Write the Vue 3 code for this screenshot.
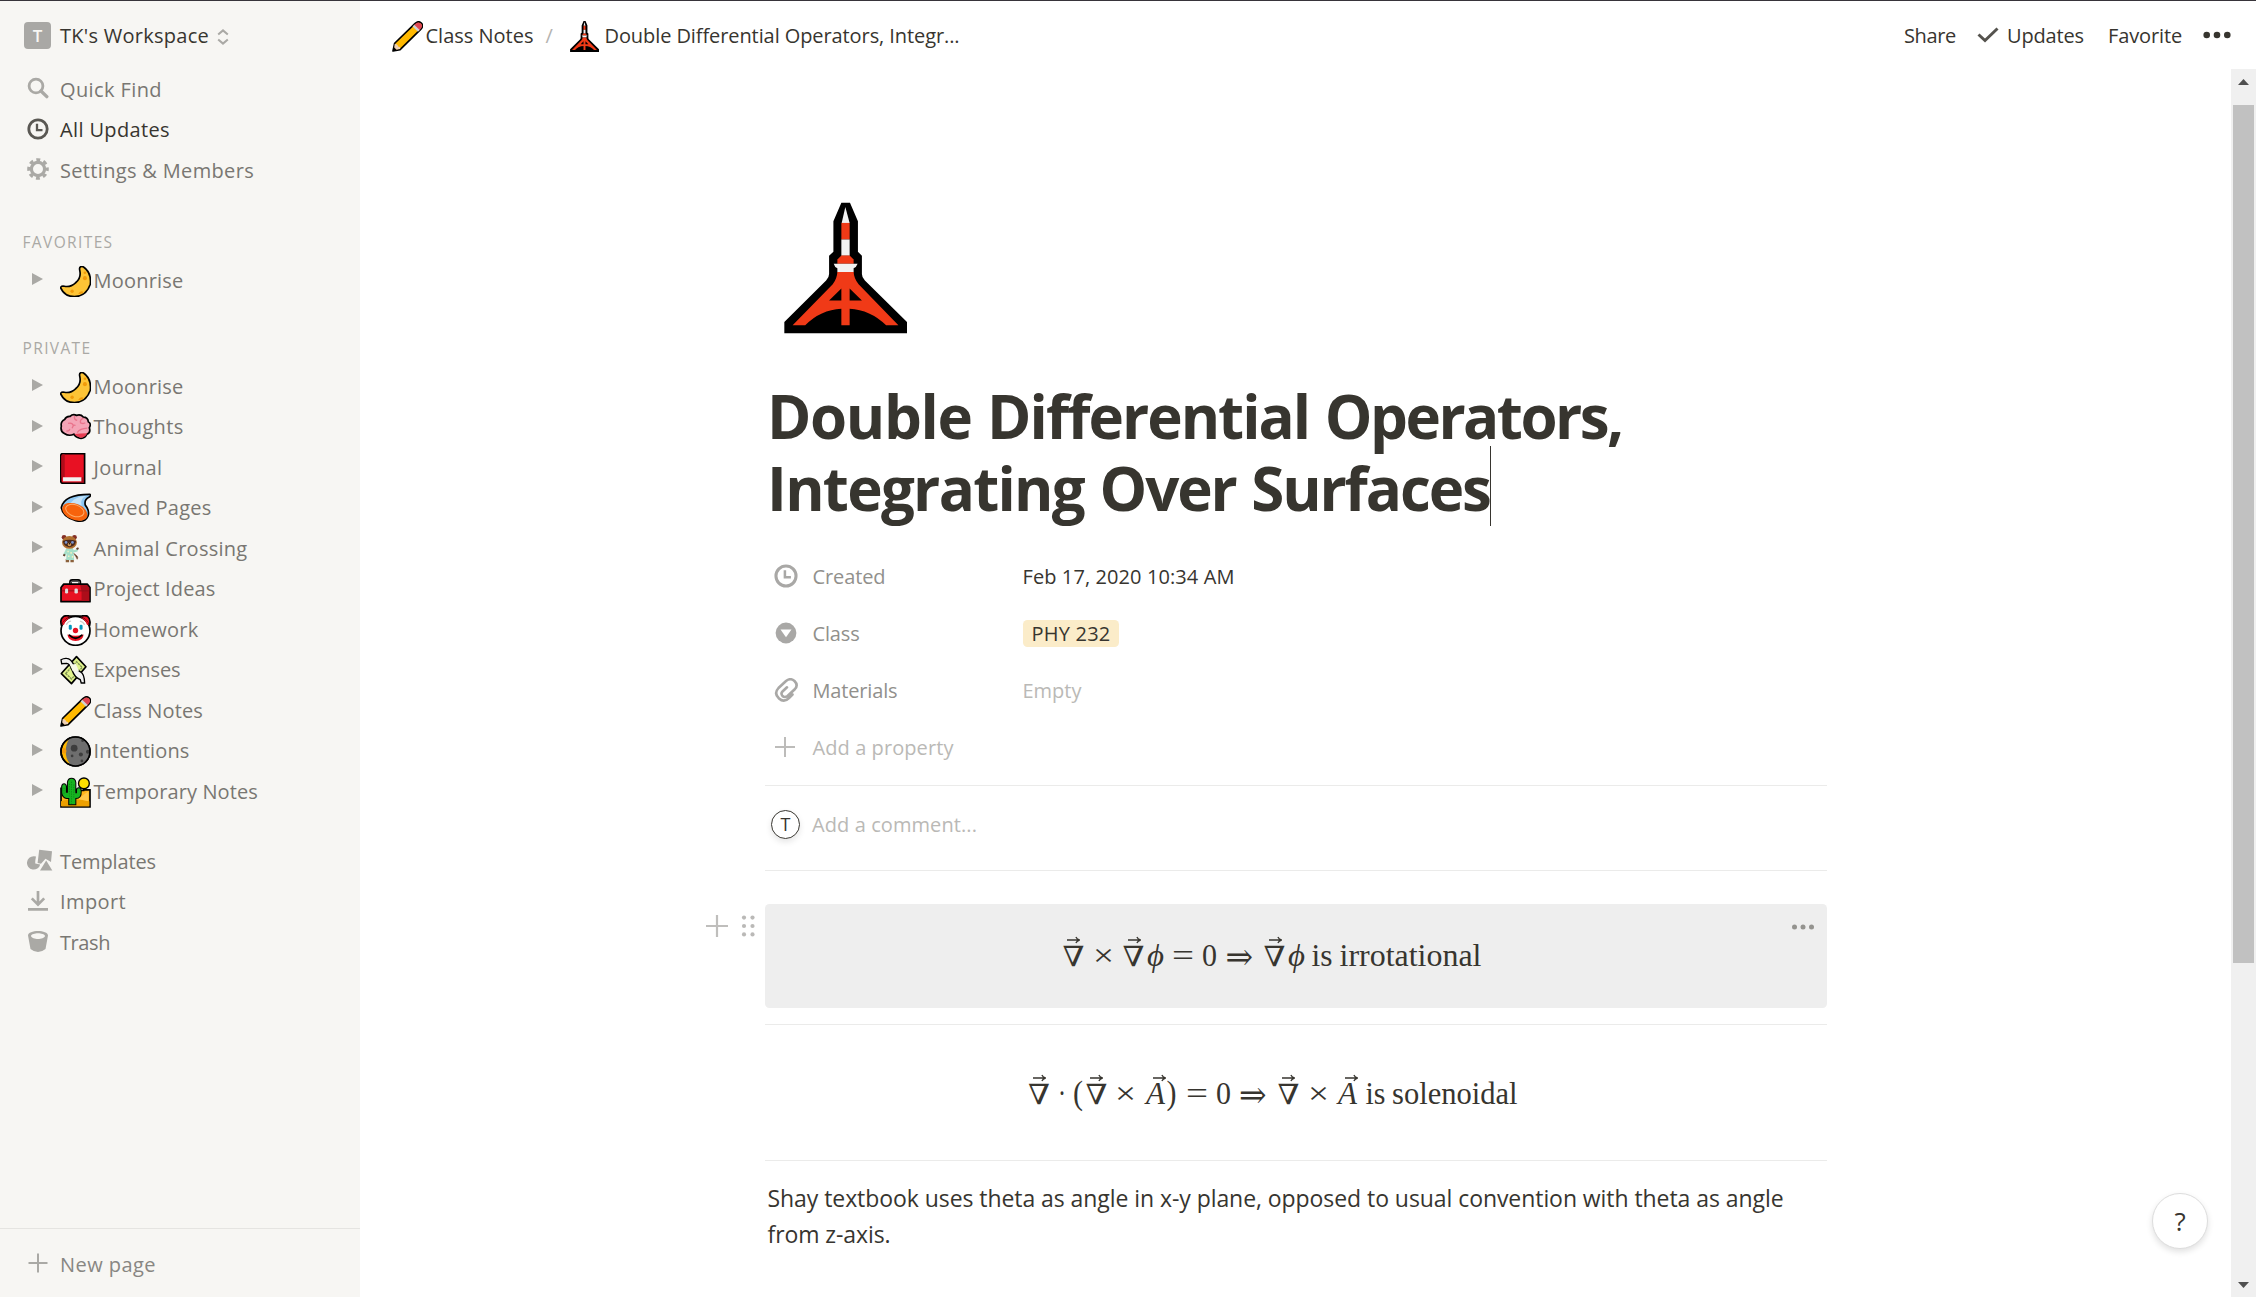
<script setup>
const vFit = {
  mounted(el, { value }) {
    const natural = el.getBoundingClientRect().width
    const count = [...el.textContent.trim()].length
    el.style.letterSpacing = `${(value - natural) / count}px`
  },
}

const pages = [
  { icon: 'moon', name: 'Moonrise', w: 90 },
  { icon: 'brain', name: 'Thoughts', w: 90 },
  { icon: 'book', name: 'Journal', w: 69 },
  { icon: 'comet', name: 'Saved Pages', w: 118 },
  { icon: 'nook', name: 'Animal Crossing', w: 154 },
  { icon: 'toolbox', name: 'Project Ideas', w: 122 },
  { icon: 'clown', name: 'Homework', w: 105 },
  { icon: 'money', name: 'Expenses', w: 87 },
  { icon: 'pencil', name: 'Class Notes', w: 109.5 },
  { icon: 'darkmoon', name: 'Intentions', w: 96 },
  { icon: 'desert', name: 'Temporary Notes', w: 164.5 },
]
const sections = [
  { title: 'FAVORITES', w: 91, cls: 'fav', items: pages.slice(0, 1) },
  { title: 'PRIVATE', w: 69, cls: 'priv', items: pages },
]

const vec = (x, y) => `M${x} ${y}h12.5m-3.6 -3q1 2.4 3.8 3q-2.8 .6 -3.8 3`
const eq1 = {
  tokens: [
    ['∇', 1062.5, 22, 'nabla'], ['×', 1093, 21, 'op'], ['∇', 1122.5, 22, 'nabla'], ['ϕ', 1147, 17, 'it'],
    ['=', 1172, 22, 'op'], ['0', 1202, 15, 'rm'], ['⇒', 1225, 29, 'arr'], ['∇', 1263.5, 22, 'nabla'],
    ['ϕ', 1288, 17, 'it'], ['is', 1311.5, 21, 'rm'], ['irrotational', 1339.5, 142, 'rm'],
  ],
  arrows: [1067, 1128, 1269],
}
const eq2 = {
  tokens: [
    ['∇', 1028, 22, 'nabla'], ['·', 1058, 8, 'rm'], ['(', 1073, 10, 'par'], ['∇', 1085.5, 22, 'nabla'],
    ['×', 1115, 21, 'op'], ['A', 1146, 19, 'it'], [')', 1166.5, 10, 'par'], ['=', 1186, 22, 'op'],
    ['0', 1216, 15, 'rm'], ['⇒', 1238.5, 29, 'arr'], ['∇', 1277.5, 22, 'nabla'], ['×', 1308, 21, 'op'],
    ['A', 1338, 19, 'it'], ['is', 1365.5, 20, 'rm'], ['solenoidal', 1392, 125.5, 'rm'],
  ],
  arrows: [1033, 1090, 1153, 1282, 1345],
}
</script>

<template>
  <svg width="0" height="0" class="defs">
    <symbol id="moon" viewBox="0 0 92 92">
      <path d="M62 2Q56 4 59 15Q63 36 47 49Q31 64 13 60Q3 58 2 65Q14 91 43 91Q78 90 90 54Q94 20 70 3Q66 0 62 2Z" fill="#fdc436" stroke="#000" stroke-width="5" />
      <g fill="#f19a0b"><circle cx="74" cy="36" r="6" /><circle cx="36" cy="75" r="5" /><circle cx="74" cy="20" r="4" /><path d="M54 83q6-12 16-6q-4 7-16 6Z" /></g>
    </symbol>
    <symbol id="brain" viewBox="0 0 92 92">
      <path d="M14 22Q18 12 30 13Q38 5 49 10Q62 6 69 15Q83 15 84 29Q94 34 87 47Q92 61 80 66Q73 80 59 78Q45 74 41 66Q27 73 13 64Q0 57 4 42Q1 28 14 22Z" fill="#f4a4b6" stroke="#000" stroke-width="5" />
      <path d="M43 65Q61 63 81 63Q74 77 59 76Q48 74 43 65Z" fill="#e73c52" />
      <path d="M24 34q12-4 16 7M36 48q4-12 10-8M44 12q-4 10 7 13M70 18q-12 4-9 14q8 4 14 0M51 61q8-12 30-13M19 56q8 2 10-6" fill="none" stroke="#e9738b" stroke-width="4" />
    </symbol>
    <symbol id="book" viewBox="0 0 92 92">
      <path d="M7 2H73V90H9Q2 90 2 82V10Q2 2 7 2Z" fill="#e81123" stroke="#000" stroke-width="5" />
      <path d="M4 10Q4 5 9 4H14V73H4Z" fill="#b00c1a" /><path d="M9 72H64V84H9Z" fill="#f2f2f2" /><path d="M64 72h7v16h-7z" fill="#a40b18" />
    </symbol>
    <symbol id="comet" viewBox="0 0 92 92">
      <path d="M4 43Q12 4 88 4Q94 6 87 12Q71 19 75 36Q89 53 83 69Q74 89 47 82Q7 71 4 43Z" fill="#8ec8f3" stroke="#000" stroke-width="5" />
      <path d="M41 20Q56 9 80 8Q58 15 64 36Q50 30 30 31Z" fill="#c4e2f7" />
      <ellipse cx="44" cy="56" rx="39" ry="24" transform="rotate(22 44 56)" fill="#f7630c" /><ellipse cx="44" cy="52" rx="28" ry="17" transform="rotate(20 44 52)" fill="none" stroke="#ffac69" stroke-width="3" />
    </symbol>
    <symbol id="nook" viewBox="0 0 92 92">
      <path d="M40 57Q58 68 51 75L47 67Z" fill="#4b2e22" stroke="#8d6549" stroke-width="2" />
      <path d="M17 74v10h10V75M31 74v10h10V74" fill="#8b613b" />
      <path d="M18 44L9 63L15 66L20 57L18 77H42L40 55L52 52L54 44L41 48L38 42Z" fill="#a6dfc8" />
      <path d="M22 52h4M31 56h4M24 66h4M35 68h4" stroke="#f6f2c0" stroke-width="5" /><path d="M10 61l5 3M49 45l6-3" stroke="#66422f" stroke-width="6" />
      <circle cx="12" cy="10" r="7" fill="#842f25" /><circle cx="43" cy="10" r="7" fill="#842f25" />
      <ellipse cx="28" cy="25" rx="22" ry="19" fill="#b0702f" /><path d="M8 21q20-8 40 0q-4 17-20 18q-16-1-20-18Z" fill="#49291f" />
      <circle cx="18" cy="25" r="4" fill="#7995d0" /><circle cx="37" cy="25" r="4" fill="#7995d0" /><ellipse cx="28" cy="31" rx="5" ry="5" fill="#d49b55" /><circle cx="28" cy="29" r="2" fill="#111" />
    </symbol>
    <symbol id="toolbox" viewBox="0 0 92 92">
      <path d="M31 32V24Q31 19 36 19H54Q59 19 59 24V32" fill="none" stroke="#000" stroke-width="8" /><path d="M32 31V25Q32 21 38 21H52Q58 21 58 25V31" fill="none" stroke="#6c6c6c" stroke-width="3" />
      <path d="M11 30H81L89 40V82H3V40Z" fill="#e81123" stroke="#000" stroke-width="5" stroke-linejoin="round" />
      <path d="M60 33H80L87 41V80H64V51Z" fill="#ad0d1a" /><path d="M5 50H87" stroke="#90101b" stroke-width="3" />
      <rect x="15" y="43" width="9" height="15" rx="4" fill="#ddd" /><rect x="43" y="43" width="10" height="15" rx="4" fill="#ddd" />
    </symbol>
    <symbol id="clown" viewBox="0 0 92 92">
      <path d="M4 30Q-1 12 11 4Q20 0 27 3H65Q75 0 82 4Q92 12 88 30Z" fill="#e81123" stroke="#000" stroke-width="5" />
      <circle cx="46" cy="47" r="43" fill="#fff" stroke="#000" stroke-width="5" />
      <path d="M6 29Q13 9 32 7Q16 16 12 29ZM86 29Q79 9 60 7Q76 16 80 29Z" fill="#e81123" />
      <path d="M19 29q5-11 14-11M59 18q9 1 14 11" fill="none" stroke="#ccc" stroke-width="4" />
      <rect x="26" y="29" width="9" height="15" rx="4" fill="#0497be" /><rect x="58" y="29" width="9" height="15" rx="4" fill="#0497be" />
      <circle cx="46" cy="46" r="8" fill="#e81123" /><path d="M22 58Q46 65 70 58Q69 77 46 77Q24 77 22 58Z" fill="#e81123" /><path d="M28 60Q46 78 65 60" fill="none" stroke="#000" stroke-width="5" stroke-linecap="round" />
    </symbol>
    <symbol id="money" viewBox="0 0 92 92">
      <path d="M4 55L49 5L77 35L34 85Z" fill="#e0f28c" stroke="#000" stroke-width="5" stroke-linejoin="round" />
      <path d="M17 55L49 20L66 37L34 71Z" fill="none" stroke="#7f9153" stroke-width="4" stroke-dasharray="7 2" />
      <path d="M5 26L3 14Q11 9 20 10Q32 11 40 27Q49 46 61 50Q72 55 73 83L63 83L60 73Q43 66 36 45Q28 25 20 25Z" fill="#f2f2f2" stroke="#000" stroke-width="4" />
      <path d="M29 29L47 27L57 49L38 48Z" fill="#f7f8e6" />
    </symbol>
    <symbol id="pencil" viewBox="0 0 92 92">
      <path d="M3 89L8 66L68 8Q78 -2 87 6Q95 15 85 25L24 85Z" fill="#ffb900" stroke="#000" stroke-width="5" stroke-linejoin="round" />
      <path d="M65 12L81 28L86 22Q93 14 85 7Q77 2 70 8Z" fill="#df4754" /><path d="M61 16L66 11L82 27L77 32Z" fill="#d2d2d2" /><path d="M8 68Q17 67 18 76Q26 77 24 83L8 86L6 83Z" fill="#eed0b5" /><path d="M3 89L6 78L14 86Z" />
    </symbol>
    <symbol id="darkmoon" viewBox="0 0 92 92">
      <circle cx="46" cy="46" r="43" fill="#ffb900" stroke="#000" stroke-width="5" /><path d="M30 5Q88 -2 90 46Q84 95 34 88Q17 72 17 47Q17 20 30 5Z" fill="#6e6e6e" />
      <path d="M8 36a8 8 0 0 1 5 16a8 8 0 0 1-8-3Z" fill="#f39a0c" />
      <g fill="#3d3d3d"><circle cx="42" cy="36" r="10" /><circle cx="62" cy="55" r="6" /><circle cx="36" cy="59" r="4" /><circle cx="83" cy="47" r="6" /><circle cx="65" cy="74" r="4" /><circle cx="67" cy="14" r="4" /></g>
      <circle cx="46" cy="46" r="43" fill="none" stroke="#000" stroke-width="5" />
    </symbol>
    <symbol id="desert" viewBox="0 0 92 92">
      <path d="M3 34H25V40H70V38H89V89H3Z" fill="#ffb61b" stroke="#000" stroke-width="5" /><path d="M3 72Q36 60 87 72V87H3Z" fill="#eda000" /><path d="M54 65L84 42V72Z" fill="#ffc84a" />
      <circle cx="71" cy="19" r="16" fill="#ffdf00" stroke="#000" stroke-width="4" />
      <path d="M26 82V64H20Q8 62 5 48V28Q6 20 12 20Q18 20 19 28V45H22V16Q24 4 34 4Q45 4 47 16V47H49V37Q51 31 57 32Q63 33 63 42Q64 64 47 64V82Z" fill="#16b421" stroke="#000" stroke-width="3" />
      <path d="M34 14V79M28 20V58M41 22V62M12 32V50" stroke="#087d14" stroke-width="2" stroke-dasharray="4 3" />
    </symbol>
    <symbol id="tower" viewBox="130 66 371 396">
      <path d="M303 67H329L353 123V215L365 227V282Q365 293 374 302L501 427V461H131V427L257 302Q266 293 266 282V227L279 215V123Z" />
      <path d="M315 80L304 128H328Z" fill="#f2f2f2" /><path d="M303 128H328V178H303Z" fill="#f03a17" /><path d="M303 178H328V227H303Z" fill="#f2f2f2" />
      <path d="M303 226H328L340 238V251H291V238Z" fill="#f03a17" /><path d="M280 251H352Q348 262 340 265V277H291V265Q283 262 280 251Z" fill="#f2f2f2" />
      <path d="M291 276H340Q341 296 355 313L475 437H438Q390 390 328 387V437H303V387Q240 390 194 437H156L277 313Q290 296 291 276Z" fill="#f03a17" />
      <path d="M303 326V362H266ZM328 326V362H365Z" />
    </symbol>
    <symbol id="clock" viewBox="0 0 22 22"><circle cx="11" cy="11" r="9.2" fill="none" stroke="currentColor" stroke-width="2.8" /><path d="M10 5.8V12.2H15.5" fill="none" stroke="currentColor" stroke-width="2.3" /></symbol>
  </svg>

  <div class="window">
    <aside class="sidebar">
      <header class="workspace">
        <span class="badge">T</span>
        <span class="txt" v-fit="149">TK's Workspace</span>
        <svg class="switch" width="12" height="16" viewBox="0 0 12 16" fill="none" stroke="#aaa9a5" stroke-width="2"><path d="M1.2 5.6L6 1.4L10.8 5.6M1.2 10.4L6 14.6L10.8 10.4" /></svg>
      </header>
      <nav class="menu">
        <div class="row">
          <svg width="22" height="22" viewBox="0 0 22 22" fill="none" stroke="#aaa9a5"><circle cx="9" cy="9" r="6.9" stroke-width="2.8" /><path d="M14 14L19.8 19.6" stroke-width="3.4" stroke-linecap="round" /></svg>
          <span class="txt" v-fit="102">Quick Find</span>
        </div>
        <div class="row active">
          <svg width="22" height="22"><use href="#clock" /></svg>
          <span class="txt" v-fit="110">All Updates</span>
        </div>
        <div class="row">
          <svg width="22" height="22" viewBox="-11 -11 22 22" fill="none" stroke="#aaa9a5"><circle r="6.6" stroke-width="3.2" /><circle r="9.2" stroke-width="3.2" stroke-dasharray="3.9 3.325" stroke-dashoffset="1.95" /></svg>
          <span class="txt" v-fit="194">Settings &amp; Members</span>
        </div>
      </nav>
      <section v-for="s in sections" :key="s.title" :class="s.cls">
        <h2><span class="txt" v-fit="s.w">{{ s.title }}</span></h2>
        <div v-for="p in s.items" :key="p.name" class="page">
          <svg class="tri" width="11" height="12" viewBox="0 0 11 12"><path d="M0 0L11 6L0 12Z" fill="#aaa9a5" /></svg>
          <svg class="emoji" width="31" height="31"><use :href="'#' + p.icon" /></svg>
          <span class="txt" v-fit="p.w">{{ p.name }}</span>
        </div>
      </section>
      <nav class="tools">
        <div class="row">
          <svg width="26" height="22" viewBox="0 0 26 22" fill="#aaa9a5"><path d="M7 7.2L9 7.4Q8 12 8.3 14.5L13.2 15.4A6.7 6.7 0 1 1 7 7.2Z" /><path d="M12.2 .7L25 2.2L24 13L18.5 9.7L14 14.7L10.6 14.1Z" /><path d="M19.2 11.5L25.3 21.6H13Z" /></svg>
          <span class="txt" v-fit="96">Templates</span>
        </div>
        <div class="row">
          <svg width="22" height="22" viewBox="0 0 22 22" fill="none" stroke="#aaa9a5" stroke-width="2.7"><path d="M11 1V14M4.8 8.4L11 14.6L17.2 8.4M1 19.4H21" /></svg>
          <span class="txt" v-fit="66">Import</span>
        </div>
        <div class="row">
          <svg width="22" height="22" viewBox="0 0 22 22" fill="#aaa9a5" fill-rule="evenodd"><path d="M1 5.5C1 -.5 21 -.5 21 5.5L18.5 19Q15 22 11 22Q7 22 3.5 19ZM4 6C5 10 17 10 18 6C17 2.4 5 2.4 4 6Z" /></svg>
          <span class="txt" v-fit="50">Trash</span>
        </div>
      </nav>
      <footer class="row newpage">
        <svg width="22" height="22" viewBox="0 0 22 22" stroke="#aaa9a5" stroke-width="2"><path d="M11 1.5V20.5M1.5 11H20.5" /></svg>
        <span class="txt" v-fit="96">New page</span>
      </footer>
    </aside>

    <main>
      <header class="topbar">
        <svg width="31" height="31"><use href="#pencil" /></svg>
        <span class="txt crumb" v-fit="108">Class Notes</span>
        <span class="slash">/</span>
        <svg width="29" height="31"><use href="#tower" /></svg>
        <span class="txt doc" v-fit="355">Double Differential Operators, Integr...</span>
        <div class="actions">
          <span class="txt share" v-fit="52">Share</span>
          <svg width="22" height="16" viewBox="0 0 22 16" fill="none" stroke="#55534e" stroke-width="3"><path d="M1.5 7.5L8 13.5L20.5 1.5" /></svg>
          <span class="txt upd" v-fit="77">Updates</span>
          <span class="txt favr" v-fit="74">Favorite</span>
          <svg width="28" height="8" viewBox="0 0 28 8" fill="#37352f"><circle cx="3.7" cy="4" r="3.3" /><circle cx="14" cy="4" r="3.3" /><circle cx="24.3" cy="4" r="3.3" /></svg>
        </div>
      </header>

      <div class="scroller">
        <article>
          <svg class="cover" width="123" height="132"><use href="#tower" /></svg>
          <h1>
            <span v-fit="204.5">Double</span> <span v-fit="322">Differential</span> <span v-fit="297">Operators,</span><br>
            <span v-fit="317">Integrating</span> <span v-fit="136">Over</span> <span v-fit="238.5">Surfaces</span><i class="caret"></i>
          </h1>
          <div class="prop">
            <svg width="24" height="24" viewBox="0 0 22 22"><use href="#clock" /></svg>
            <span class="label"><span class="txt" v-fit="73">Created</span></span>
            <span class="txt val" v-fit="212">Feb 17, 2020 10:34 AM</span>
          </div>
          <div class="prop">
            <svg width="24" height="24" viewBox="0 0 24 24"><circle cx="12" cy="12" r="10.4" fill="#a9a8a6" /><path d="M6.5 8.5H17.5L12 16.3Z" fill="#fff" /></svg>
            <span class="label"><span class="txt" v-fit="47">Class</span></span>
            <span class="pill"><span class="txt" v-fit="79">PHY 232</span></span>
          </div>
          <div class="prop">
            <svg width="24" height="24" viewBox="0 0 24 24" fill="none" stroke="#a9a8a6" stroke-width="2.6" stroke-linecap="round"><path d="M18.5 16.5L15 20Q10 25 5 20.5Q-.5 15.5 4.5 10L12 3Q16.5 -.5 20.5 3Q24.5 7 21 11L13.5 18Q10.5 20 8.5 18Q6.5 15.5 8.5 13.5L13 9.3" /></svg>
            <span class="label"><span class="txt" v-fit="85">Materials</span></span>
            <span class="txt faint" v-fit="59">Empty</span>
          </div>
          <div class="prop addprop">
            <svg width="24" height="24" viewBox="0 0 24 24" stroke="#bdbcba" stroke-width="2"><path d="M11 2V22M1 12H21" /></svg>
            <span class="txt faint" v-fit="141">Add a property</span>
          </div>
          <div class="comment">
            <span class="avatar">T</span>
            <span class="txt faint" v-fit="165">Add a comment...</span>
          </div>
          <div class="block">
            <svg class="handle" width="50" height="26" viewBox="0 0 50 26"><path d="M12 2V24M1 13H23" stroke="#bfbebc" stroke-width="2.2" /><g fill="#bab9b7"><circle v-for="n in 6" :key="n" :cx="n % 2 ? 39 : 47.5" :cy="4.6 + Math.floor((n - 1) / 2) * 8.4" r="2.1" /></g></svg>
            <svg class="eq" width="1062" height="104" viewBox="765 0 1062 104">
              <text v-for="t in eq1.tokens" :key="t[1]" :class="t[3]" :x="t[1]" y="62" :textLength="t[2]" lengthAdjust="spacingAndGlyphs">{{ t[0] }}</text>
              <path v-for="a in eq1.arrows" :key="a" :d="vec(a, 36)" />
            </svg>
            <svg class="more" width="24" height="6" viewBox="0 0 24 6" fill="#94938f"><circle cx="3.5" cy="3" r="2.5" /><circle cx="12" cy="3" r="2.5" /><circle cx="20.5" cy="3" r="2.5" /></svg>
          </div>
          <div class="plain">
            <svg class="eq" width="1062" height="104" viewBox="765 0 1062 104">
              <text v-for="t in eq2.tokens" :key="t[1]" :class="t[3]" :x="t[1]" y="62" :textLength="t[2]" lengthAdjust="spacingAndGlyphs">{{ t[0] }}</text>
              <path v-for="a in eq2.arrows" :key="a" :d="vec(a, 36)" />
            </svg>
          </div>
          <p>
            <span v-fit="1016">Shay textbook uses theta as angle in x-y plane, opposed to usual convention with theta as angle</span><br>
            <span v-fit="123">from z-axis.</span>
          </p>
        </article>
        <div class="scrollbar">
          <svg width="11" height="6" viewBox="0 0 11 6"><path d="M0 6L5.5 0L11 6Z" fill="#505050" /></svg>
          <div class="thumb"></div>
          <svg class="down" width="11" height="6" viewBox="0 0 11 6"><path d="M0 0L5.5 6L11 0Z" fill="#505050" /></svg>
        </div>
      </div>
      <button class="help">?</button>
    </main>
  </div>
</template>

<style>
body { margin: 0; background: #fff; overflow: hidden; }
</style>

<style scoped>
.defs { position: absolute; }
.window { display: flex; width: 2256px; height: 1297px; box-sizing: border-box; border-top: 1px solid #37343a; font-family: "Open Sans", "Noto Sans", sans-serif; font-size: 20px; color: #37352f; position: relative; overflow: hidden; }
.txt, h1 span, p span { display: inline-block; white-space: nowrap; }
svg { display: block; flex: none; }
.sidebar { width: 360px; flex: none; background: #f7f6f3; color: #797772; font-weight: 500; display: flex; flex-direction: column; }
.workspace { height: 68px; box-sizing: border-box; padding: 1px 0 0 24px; display: flex; align-items: center; color: #37352f; }
.badge { width: 27px; height: 27px; margin-right: 9px; border-radius: 4px; background: #a9a8a5; color: #f7f6f3; font-size: 17px; font-weight: 600; line-height: 27px; text-align: center; }
.switch { margin: 2px 0 0 8px; }
.row { height: 40.5px; display: flex; align-items: center; padding-left: 60px; }
.row svg { margin-left: -33.5px; margin-right: 11.5px; position: relative; top: -1px; }
.row svg[width="26"] { margin-right: 7.5px; }
.row.active { color: #37352f; }
.row.active svg { color: #5a5853; }
h2 { margin: 0; height: 38px; line-height: 40px; padding-left: 22.5px; font-size: 15.5px; font-weight: 500; color: #aaa9a5; box-sizing: border-box; }
.fav { margin-top: 31.5px; }
.priv { margin-top: 27.5px; }
.page { height: 40.5px; display: flex; align-items: center; padding-left: 32px; }
.tri { position: relative; top: -1px; }
.emoji { margin: 2px 2.5px 0 17px; }
.tools { margin-top: 29.5px; }
.newpage { margin-top: auto; height: 69px; border-top: 1.5px solid #e5e4e1; color: #888682; padding-top: 2px; box-sizing: border-box; }
main { flex: 1; display: flex; flex-direction: column; position: relative; min-width: 0; }
.topbar { height: 68px; flex: none; display: flex; align-items: center; padding: 1px 25px 0 32px; box-sizing: border-box; }
.topbar svg { position: relative; top: 1px; }
.crumb { margin-left: 2.5px; }
.slash { margin: 0 15px 0 12px; width: 9px; color: #b5b4b1; }
.doc { margin-left: 6px; }
.actions { margin-left: auto; display: flex; align-items: center; }
.topbar .actions svg { top: -1px; }
.share { margin-right: 21px; }
.upd { margin: 0 24px 0 8px; }
.favr { margin-right: 21px; }
.scroller { flex: 1; display: flex; min-height: 0; overflow: hidden; }
article { width: 1062px; margin-left: 405px; padding-top: 133px; flex: none; }
.cover { margin-left: 18.5px; }
h1 { margin: 46px 0 0; padding-left: 2px; font-size: 60px; line-height: 72px; height: 144px; font-weight: 700; white-space: nowrap; }
h1 .caret { display: inline-block; width: 1.5px; height: 80px; background: #37352f; vertical-align: top; margin: -6px 0 -2px; }
.prop { height: 57px; display: flex; align-items: center; padding-left: 9px; }
h1 + .prop { margin-top: 24px; }
.prop > svg { color: #a9a8a6; margin-right: 14.5px; position: relative; top: -1px; }
.label { width: 210px; color: #91908c; }
.pill { background: #fbecc9; border-radius: 4.5px; height: 27px; line-height: 28px; padding: 0 7px 0 9px; width: 80px; }
.faint { color: #bab9b6; }
.addprop { border-bottom: 1.5px solid #ebebea; padding-bottom: 9px; }
.comment { height: 85px; box-sizing: border-box; padding: 0 0 7px 6px; display: flex; align-items: center; border-bottom: 1.5px solid #ebebea; }
.avatar { width: 27px; height: 27px; border: 1.7px solid #37352f; border-radius: 50%; font-size: 18px; line-height: 27px; text-align: center; box-shadow: 0 3px 6px rgba(0,0,0,.1); margin-right: 12px; }
.block { margin-top: 33px; height: 104px; border-radius: 4.5px; background: #eee; position: relative; }
.handle { position: absolute; left: -60px; top: 9px; }
.more { position: absolute; right: 12px; top: 20px; }
.plain { margin-top: 16px; height: 137px; box-sizing: border-box; padding-top: 17px; border-top: 1.5px solid #ebebea; border-bottom: 1.5px solid #ebebea; }
.eq text { font-family: "Liberation Serif", serif; font-size: 31px; fill: #37352f; }
.eq .it { font-style: italic; }
.eq .nabla { font-family: "DejaVu Serif", serif; font-size: 28px; }
.eq .arr { font-family: "DejaVu Math TeX Gyre", "DejaVu Serif", serif; font-size: 31px; }
.eq .par { font-size: 33px; }
.eq path { fill: none; stroke: #37352f; stroke-width: 1.3; }
p { margin: 19px 0 0 2.5px; font-size: 23px; line-height: 36px; white-space: nowrap; }
.scrollbar { width: 25px; margin-left: auto; background: #f0f0f0; display: flex; flex-direction: column; align-items: center; padding: 10px 0 9px; box-sizing: border-box; }
.thumb { width: 21px; height: 858px; margin-top: 20px; background: #c1c1c1; }
.down { margin-top: auto; }
.help { position: absolute; right: 48px; bottom: 48.5px; width: 56px; height: 56px; border-radius: 50%; border: 1px solid #ddd; background: #fff; box-shadow: 0 3px 6px rgba(0,0,0,.12); font: 500 26px "Open Sans", sans-serif; color: #37352f; padding: 0; }
</style>
